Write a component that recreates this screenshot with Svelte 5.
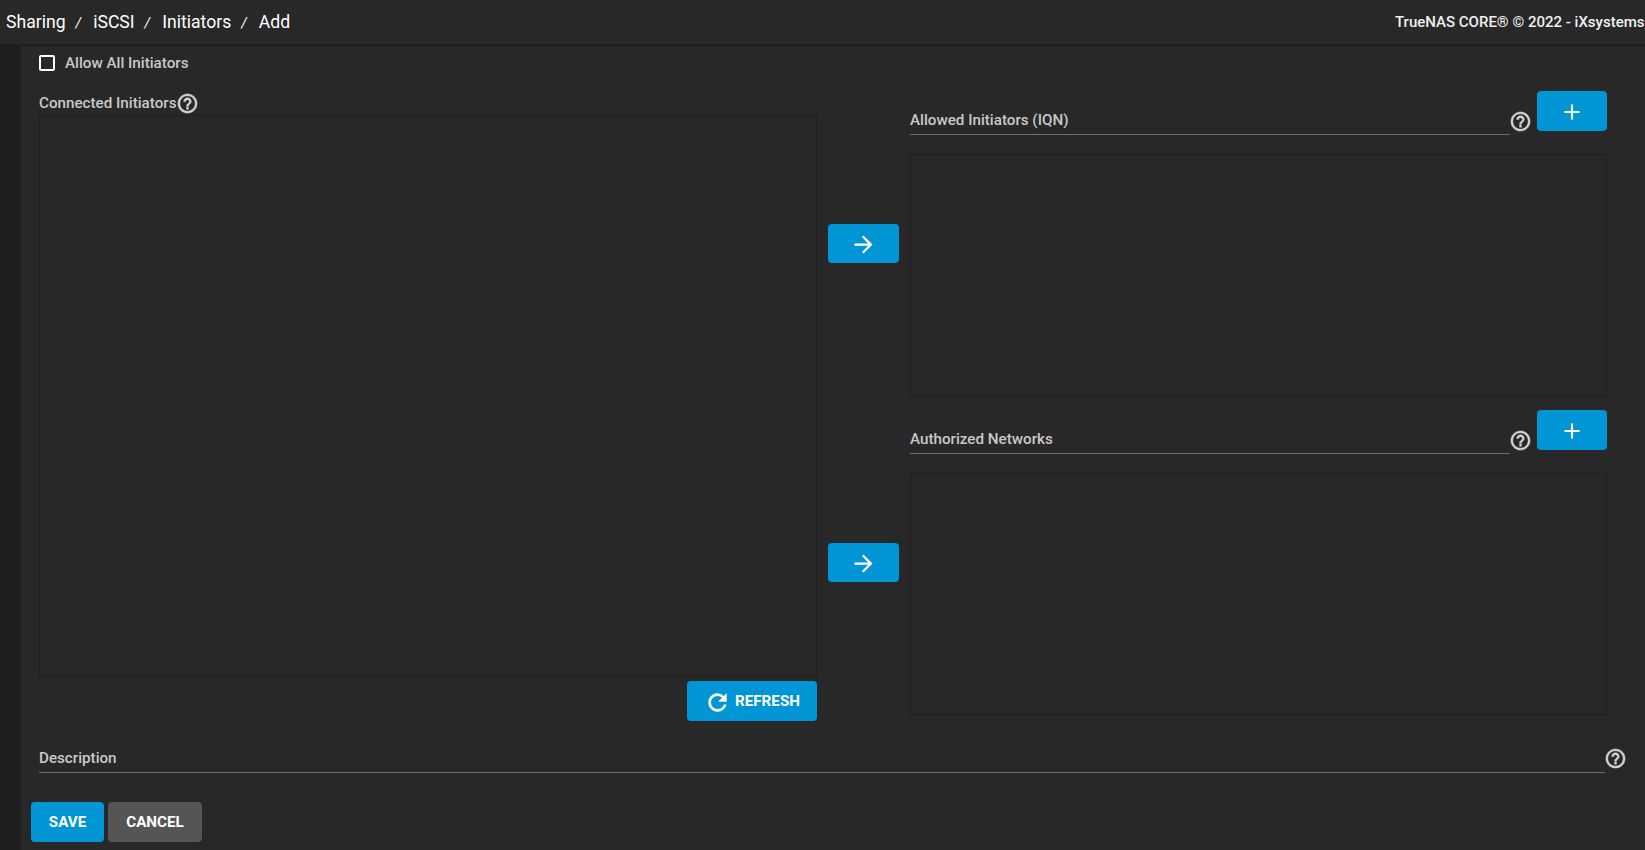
<script>
  const crumbs = ['Sharing', 'iSCSI', 'Initiators', 'Add'];
  const right = [
    { label: 'Allowed Initiators (IQN)', top: 'first' },
    { label: 'Authorized Networks', top: 'second' }
  ];
</script>

{#snippet help()}
  <svg class="help" viewBox="0 0 24 24" width="23" height="23" aria-hidden="true">
    <path fill="currentColor" stroke="currentColor" stroke-width="0.5" d="M11 18h2v-2h-2v2zm1-16C6.48 2 2 6.48 2 12s4.48 10 10 10 10-4.48 10-10S17.52 2 12 2zm0 18c-4.41 0-8-3.59-8-8s3.59-8 8-8 8 3.59 8 8-3.59 8-8 8zm0-14c-2.21 0-4 1.79-4 4h2c0-1.1.9-2 2-2s2 .9 2 2c0 2-3 1.75-3 5h2c0-2.25 3-2.5 3-5 0-2.21-1.79-4-4-4z"/>
  </svg>
{/snippet}

{#snippet arrow()}
  <svg viewBox="0 0 24 24" width="27" height="27" aria-hidden="true">
    <path fill="#fff" d="M12 4l-1.41 1.41L16.17 11H4v2h12.17l-5.58 5.59L12 20l8-8z"/>
  </svg>
{/snippet}

<div class="page">
  <header class="topbar">
    <nav class="crumbs">
      {#each crumbs as c, i}
        <span class="crumb">{c}</span>
        {#if i < crumbs.length - 1}<span class="sep">/</span>{/if}
      {/each}
    </nav>
    <div class="brand">TrueNAS CORE® © 2022 - iXsystems, Inc.</div>
  </header>

  <div class="body">
    <aside class="rail"></aside>
    <main class="card">
      <label class="check">
        <span class="box"></span>
        <span>Allow All Initiators</span>
      </label>

      <div class="columns">
        <section class="left">
          <div class="conn-label"><span>Connected Initiators</span>{@render help()}</div>
          <div class="listbox conn-list"></div>
          <div class="refresh-row">
            <button class="btn refresh">
              <svg viewBox="0 0 24 24" width="27" height="27" aria-hidden="true">
                <path fill="#fff" stroke="#fff" stroke-width="0.4" d="M17.65 6.35A7.958 7.958 0 0 0 12 4c-4.42 0-7.99 3.58-7.99 8s3.57 8 7.99 8c3.73 0 6.84-2.55 7.73-6h-2.08A5.99 5.99 0 0 1 12 18c-3.31 0-6-2.69-6-6s2.69-6 6-6c1.66 0 3.14.69 4.22 1.78L13 11h7V4l-2.35 2.35z"/>
              </svg>
              REFRESH
            </button>
          </div>
        </section>

        <section class="right">
          {#each right as r}
            <div class="pair {r.top}">
              <button class="btn move">{@render arrow()}</button>
              <div class="stack">
                <div class="field-row">
                  <div class="field"><span>{r.label}</span></div>
                  {@render help()}
                  <button class="btn add">
                    <svg viewBox="0 0 24 24" width="26" height="26" aria-hidden="true">
                      <path fill="#fff" d="M19 13h-6v6h-2v-6H5v-2h6V5h2v6h6v2z"/>
                    </svg>
                  </button>
                </div>
                <div class="listbox small"></div>
              </div>
            </div>
          {/each}
        </section>
      </div>

      <div class="desc-row">
        <div class="field desc"><span>Description</span></div>
        {@render help()}
      </div>

      <div class="actions">
        <button class="btn save">SAVE</button>
        <button class="btn cancel">CANCEL</button>
      </div>
    </main>
  </div>
</div>

<style>
  :global(body) {
    margin: 0;
    background: #282828;
    overflow: hidden;
  }
  .page {
    width: 1645px;
    height: 850px;
    overflow: hidden;
    display: flex;
    flex-direction: column;
    font-family: Roboto, "Liberation Sans", sans-serif;
    color: #e0e0e0;
    background: #282828;
  }
  .topbar {
    height: 44px;
    flex: none;
    box-sizing: content-box;
    border-bottom: 2px solid #1e1e1e;
    display: flex;
    align-items: center;
    justify-content: space-between;
    padding-left: 6px;
    white-space: nowrap;
    overflow: hidden;
  }
  .crumbs {
    display: flex;
    align-items: center;
    font-size: 17.6px;
    color: #fff;
  }
  .sep {
    font-size: 14px;
    font-style: italic;
    margin: 2px 12px 0 10px;
  }
  .brand {
    font-size: 15px;
    font-weight: 500;
    color: #f0f0f0;
    flex: none;
    width: 250px;
    overflow: hidden;
  }
  .body {
    flex: 1;
    display: flex;
    min-height: 0;
  }
  .rail {
    width: 21px;
    flex: none;
    background: #1e1e1e;
  }
  .card {
    flex: 1;
    min-width: 0;
    padding: 9px 0 0 18px;
    font-size: 15.2px;
    font-weight: 500;
    color: #c8c8c8;
  }
  .check {
    display: flex;
    align-items: center;
    gap: 10px;
    height: 16px;
  }
  .box {
    width: 12px;
    height: 12px;
    border: 2px solid #fff;
    border-radius: 2px;
  }
  .columns {
    display: flex;
    margin-top: 20px;
  }
  .left {
    width: 778px;
    flex: none;
  }
  .conn-label {
    display: flex;
    align-items: center;
    height: 24px;
  }
  .help {
    color: #d4d4d4;
    flex: none;
  }
  .listbox {
    border: 1px solid #1e1e1e;
    box-sizing: border-box;
  }
  .conn-list {
    height: 561px;
  }
  .refresh-row {
    display: flex;
    justify-content: flex-end;
    margin-top: 5px;
  }
  .btn {
    border: 0;
    border-radius: 4px;
    background: #0095d5;
    color: #fff;
    font-family: inherit;
    font-size: 15.2px;
    font-weight: 700;
    height: 40px;
    padding: 0;
    display: inline-flex;
    align-items: center;
    justify-content: center;
  }
  .btn svg {
    transform: translateY(1px);
  }
  .refresh {
    width: 130px;
    gap: 4px;
  }
  .right {
    margin-left: 11px;
    width: 780px;
    display: flex;
    flex-direction: column;
    gap: 14px;
  }
  .pair {
    display: flex;
    align-items: center;
    gap: 11px;
  }
  .move {
    width: 71px;
    height: 39px;
    flex: none;
  }
  .stack {
    width: 697px;
  }
  .field-row {
    display: flex;
    align-items: flex-end;
    height: 44px;
    margin-bottom: 19px;
    position: relative;
  }
  .field {
    flex: 1;
    border-bottom: 1px solid #6e6e6e;
    height: 24px;
    box-sizing: border-box;
    padding-bottom: 6px;
    display: flex;
    align-items: flex-end;
    line-height: 16px;
  }
  .field-row .help {
    margin: 0 5px 0 -1px;
    transform: translateY(-2px);
  }
  .add {
    width: 70px;
    flex: none;
    align-self: flex-start;
  }
  .small {
    height: 242px;
  }
  .desc-row {
    display: flex;
    align-items: flex-end;
    margin-top: 28px;
    width: 1588px;
  }
  .desc-row .help {
    margin-left: -1px;
    transform: translateY(-3px);
  }
  .desc {
    flex: 1;
  }
  .actions {
    display: flex;
    gap: 4px;
    margin: 29px 0 0 -8px;
  }
  .save {
    width: 73px;
  }
  .cancel {
    width: 94px;
    background: #555;
  }
</style>
